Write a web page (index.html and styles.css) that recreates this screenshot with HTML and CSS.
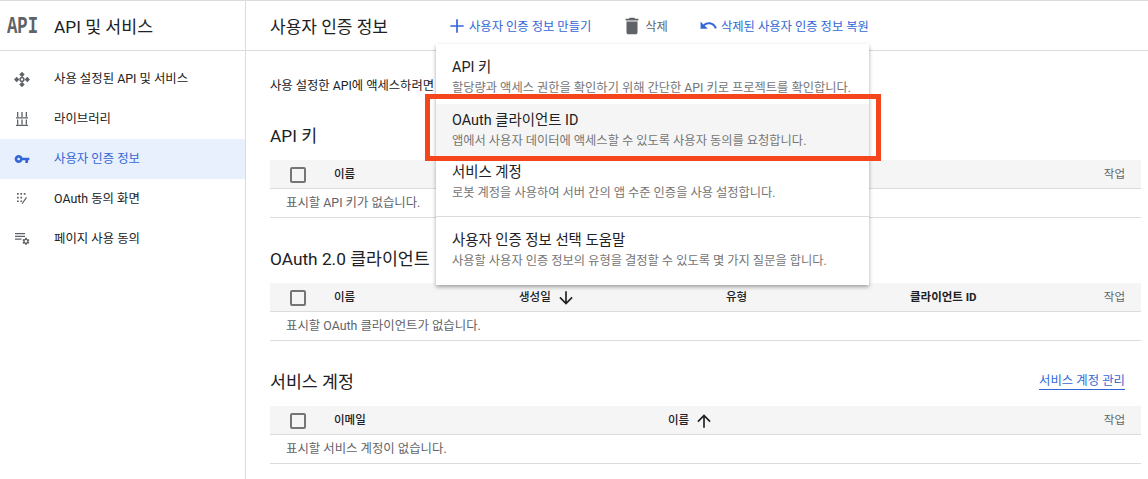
FILE: index.html
```html
<!DOCTYPE html>
<html lang="ko">
<head>
  <meta charset="UTF-8">
  <meta name="viewport" content="width=device-width, initial-scale=1.0">
  <title>사용자 인증 정보</title>
  <link rel="stylesheet" href="styles.css">
</head>
<body>

  <aside class="sidebar">
    <div class="brand">
      <span class="brand-logo"><span class="brand-logo-text">API</span></span>
      <span class="brand-name">API 및 서비스</span>
    </div>
    <nav class="nav">
      <a class="nav-item">
        <svg class="nav-icon" viewBox="0 0 16 16"><path d="M8 .8l2.7 2.7L8 6.200 5.300 3.500zM8 10.800l2.700 2.700L8 16.200l-2.700-2.700zM2.700 5.800L5.400 8.500l-2.700 2.700L0 8.500zM13.300 5.800L16 8.500l-2.700 2.700-2.700-2.700z"/><circle cx="8" cy="8.500" r="1.900" fill="none" stroke="#5f6368" stroke-width="1.500"/></svg>
        사용 설정된 API 및 서비스
      </a>
      <a class="nav-item">
        <svg class="nav-icon" viewBox="0 0 16 16"><path d="M3 1h1.300v5H3zM7.350 1h1.300v5h-1.300zM11.700 1H13v5h-1.300zM2 6.200h12v1.200H2zM3 8.600h1.300v5H3zM7.350 8.600h1.300v5h-1.300zM11.700 8.600H13v5h-1.300zM2 13.800h12V15H2z"/></svg>
        라이브러리
      </a>
      <a class="nav-item active">
        <svg class="nav-icon" viewBox="0 0 24 24"><path d="M12.650 10C11.830 7.670 9.610 6 7 6c-3.310 0-6 2.690-6 6s2.690 6 6 6c2.610 0 4.830-1.670 5.650-4H17v4h4v-4h2v-4H12.650zM7 14c-1.100 0-2-.9-2-2s.9-2 2-2 2 .9 2 2-.9 2-2 2z"/></svg>
        사용자 인증 정보
      </a>
      <a class="nav-item">
        <svg class="nav-icon" viewBox="0 0 16 16"><path d="M3 2h1.700v1.700H3zM6.400 2h1.700v1.700H6.400zM9.800 2h1.700v1.700H9.800zM3 5.700h1.700v1.700H3zM6.400 5.700h1.700v1.700H6.400zM3 9.400h1.700v1.700H3zM6.400 9.400h1.700v1.700H6.400zM7.600 12.400L12 6l1 .7-4.400 6.400z"/></svg>
        OAuth 동의 화면
      </a>
      <a class="nav-item">
        <svg class="nav-icon" viewBox="0 0 16 16"><path d="M1 2h10v1.200H1zM1 4.800h10V6H1zM1 7.600h6.500v1.200H1z"/><path transform="translate(7.600 6) scale(.36)" d="M19.140 12.940c.04-.3.06-.61.06-.94 0-.32-.02-.64-.07-.94l2.030-1.580c.18-.14.23-.41.12-.61l-1.920-3.320c-.12-.22-.37-.29-.59-.22l-2.390.96c-.5-.38-1.030-.7-1.620-.94l-.36-2.540c-.04-.24-.24-.41-.48-.41h-3.840c-.24 0-.43.17-.47.41l-.36 2.540c-.59.24-1.130.57-1.620.94l-2.390-.96c-.22-.08-.47 0-.59.22L2.740 8.870c-.12.21-.08.47.12.61l2.030 1.580c-.05.3-.09.63-.09.94s.02.64.07.94l-2.030 1.580c-.18.14-.23.41-.12.61l1.920 3.320c.12.22.37.29.59.22l2.390-.96c.5.38 1.030.7 1.620.94l.36 2.540c.05.24.24.41.48.41h3.840c.24 0 .44-.17.47-.41l.36-2.540c.59-.24 1.130-.56 1.620-.94l2.390.96c.22.08.47 0 .59-.22l1.920-3.320c.12-.22.07-.47-.12-.61l-2.010-1.580zM12 15.600c-1.980 0-3.600-1.620-3.600-3.600s1.620-3.600 3.600-3.600 3.600 1.620 3.600 3.600-1.620 3.600-3.600 3.600z"/></svg>
        페이지 사용 동의
      </a>
    </nav>
  </aside>

  <div class="main">
    <header class="toolbar">
      <h1 class="page-title">사용자 인증 정보</h1>
      <a class="tool tool-add">
        <svg class="tool-icon" viewBox="0 0 24 24"><path d="M20 13h-7v7h-2v-7H4v-2h7V4h2v7h7z"/></svg>
        사용자 인증 정보 만들기
      </a>
      <a class="tool tool-delete">
        <svg class="tool-icon" viewBox="0 0 24 24"><path d="M6 19c0 1.100.9 2 2 2h8c1.100 0 2-.9 2-2V7H6v12zM19 4h-3.500l-1-1h-5l-1 1H5v2h14V4z"/></svg>
        삭제
      </a>
      <a class="tool tool-restore">
        <svg class="tool-icon" viewBox="0 0 24 24"><path d="M12.500 8c-2.650 0-5.050.99-6.900 2.600L2 7v9h9l-3.620-3.620c1.390-1.160 3.160-1.880 5.120-1.880 3.540 0 6.550 2.310 7.600 5.500l2.370-.78C21.080 11.030 17.150 8 12.500 8z"/></svg>
        삭제된 사용자 인증 정보 복원
      </a>
    </header>

    <div class="content">
      <p class="intro">사용 설정한 API에 액세스하려면</p>

      <section class="section">
        <div class="section-head"><h2>API 키</h2></div>
        <table>
          <colgroup><col class="col-check"><col><col class="col-action"></colgroup>
          <thead>
            <tr>
              <th><span class="checkbox"></span></th>
              <th>이름</th>
              <th class="action">작업</th>
            </tr>
          </thead>
          <tbody>
            <tr><td class="empty" colspan="3">표시할 API 키가 없습니다.</td></tr>
          </tbody>
        </table>
      </section>

      <section class="section">
        <div class="section-head"><h2>OAuth 2.0 클라이언트</h2></div>
        <table>
          <colgroup><col class="col-check"><col class="col-a"><col class="col-b"><col class="col-c"><col><col class="col-action"></colgroup>
          <thead>
            <tr>
              <th><span class="checkbox"></span></th>
              <th>이름</th>
              <th class="sorted">생성일 <svg class="sort-icon" viewBox="0 0 24 24"><path d="M20 12l-1.410-1.410L13 16.170V4h-2v12.170l-5.580-5.590L4 12l8 8 8-8z"/></svg></th>
              <th>유형</th>
              <th class="strong">클라이언트 ID</th>
              <th class="action">작업</th>
            </tr>
          </thead>
          <tbody>
            <tr><td class="empty" colspan="6">표시할 OAuth 클라이언트가 없습니다.</td></tr>
          </tbody>
        </table>
      </section>

      <section class="section">
        <div class="section-head">
          <h2>서비스 계정</h2>
          <a class="manage-link">서비스 계정 관리</a>
        </div>
        <table>
          <colgroup><col class="col-check"><col class="col-d"><col><col class="col-action"></colgroup>
          <thead>
            <tr>
              <th><span class="checkbox"></span></th>
              <th>이메일</th>
              <th class="sorted">이름 <svg class="sort-icon" viewBox="0 0 24 24"><path d="M4 12l1.410 1.410L11 7.830V20h2V7.830l5.580 5.590L20 12l-8-8-8 8z"/></svg></th>
              <th class="action">작업</th>
            </tr>
          </thead>
          <tbody>
            <tr><td class="empty" colspan="4">표시할 서비스 계정이 없습니다.</td></tr>
          </tbody>
        </table>
      </section>
    </div>
  </div>

  <div class="menu">
    <a class="menu-item">
      <span class="menu-title">API 키</span>
      <span class="menu-desc">할당량과 액세스 권한을 확인하기 위해 간단한 API 키로 프로젝트를 확인합니다.</span>
    </a>
    <a class="menu-item hover">
      <span class="menu-title">OAuth 클라이언트 ID</span>
      <span class="menu-desc">앱에서 사용자 데이터에 액세스할 수 있도록 사용자 동의를 요청합니다.</span>
    </a>
    <a class="menu-item">
      <span class="menu-title">서비스 계정</span>
      <span class="menu-desc">로봇 계정을 사용하여 서버 간의 앱 수준 인증을 사용 설정합니다.</span>
    </a>
    <div class="menu-divider"></div>
    <a class="menu-item">
      <span class="menu-title">사용자 인증 정보 선택 도움말</span>
      <span class="menu-desc">사용할 사용자 인증 정보의 유형을 결정할 수 있도록 몇 가지 질문을 합니다.</span>
    </a>
  </div>

  <div class="highlight"></div>

</body>
</html>
```

FILE: styles.css
```css
* {
  box-sizing: border-box;
}
html, body {
  height: 479px;
}
body {
  margin: 0;
  display: flex;
  overflow: hidden;
  position: relative;
  border-top: 1px solid #dadce0;
  font-family: Roboto, "Noto Sans CJK KR", sans-serif;
  font-size: 12.3px;
  color: #202124;
  background-color: #fff;
}
a {
  text-decoration: none;
}

/* sidebar */
.sidebar {
  width: 246px;
  flex: none;
  border-right: 1px solid #dadce0;
}
.brand {
  height: 50px;
  display: flex;
  align-items: center;
  border-bottom: 1px solid #dadce0;
  padding-left: 7px;
}
.brand-logo {
  width: 47px;
  height: 24px;
  margin-top: 2px;
}
.brand-logo-text {
  display: block;
  transform: scaleX(0.72);
  transform-origin: left center;
  font-family: "Liberation Mono", monospace;
  font-size: 24px;
  line-height: 24px;
  font-weight: bold;
  color: #5f6368;
}
.brand-name {
  font-size: 17.3px;
}
.nav {
  padding-top: 8px;
}
.nav-item {
  height: 40px;
  display: flex;
  align-items: center;
  padding: 0 0 2px 14px;
  font-size: 12.4px;
  color: #202124;
}
.nav-icon {
  width: 16px;
  height: 16px;
  margin: 2px 24px 0 0;
  fill: #5f6368;
}
.nav-item.active {
  background-color: #e8f0fe;
  color: #3367d6;
}
.nav-item.active .nav-icon {
  fill: #3367d6;
}

/* toolbar */
.main {
  flex: 1;
  min-width: 0;
}
.toolbar {
  height: 50px;
  display: flex;
  align-items: center;
  border-bottom: 1px solid #dadce0;
  padding-left: 24px;
}
.page-title {
  width: 177px;
  margin: 0;
  font-size: 17px;
  font-weight: 400;
}
.tool {
  display: flex;
  align-items: center;
  gap: 2px;
  color: #3367d6;
}
.tool-icon {
  fill: currentColor;
}
.tool-add {
  margin-right: 30px;
}
.tool-add .tool-icon {
  width: 20px;
  height: 20px;
}
.tool-delete {
  margin-right: 31px;
  color: #5f6368;
}
.tool-delete .tool-icon {
  width: 22px;
  height: 22px;
}
.tool-restore {
  gap: 3px;
}
.tool-restore .tool-icon {
  width: 19px;
  height: 19px;
}

/* content */
.content {
  padding: 26px 7px 0 24px;
}
.intro {
  margin: 0 0 2px;
  line-height: 18px;
}
.section {
  margin-top: 15px;
}
.section-head {
  height: 50px;
  display: flex;
  align-items: center;
  justify-content: space-between;
  padding: 0 16px 2px 0;
}
.section-head h2 {
  margin: 0;
  font-size: 17.3px;
  font-weight: 400;
}
.manage-link {
  font-size: 12.4px;
  color: #3367d6;
  border-bottom: 1px solid #3367d6;
}

/* tables */
table {
  width: 100%;
  table-layout: fixed;
  border-collapse: separate;
  border-spacing: 0;
}
.col-check {
  width: 64px;
}
.col-a {
  width: 185px;
}
.col-b {
  width: 207px;
}
.col-c {
  width: 184px;
}
.col-d {
  width: 334px;
}
.col-action {
  width: 120px;
}
th {
  height: 29px;
  padding: 0 0 2px;
  text-align: left;
  font-size: 11.5px;
  font-weight: 500;
  background-color: #f5f5f5;
  border-bottom: 1px solid #dadce0;
}
th:first-child {
  padding: 1px 0 0 20px;
}
.checkbox {
  display: block;
  width: 16px;
  height: 16px;
  border: 2px solid #757575;
  border-radius: 2px;
}
.sorted {
  white-space: nowrap;
}
.sort-icon {
  width: 20px;
  height: 20px;
  margin: -6px 0 -6px 2px;
  vertical-align: middle;
  fill: #202124;
}
.strong {
  font-weight: 700;
}
.action {
  padding-right: 16px;
  text-align: right;
  font-weight: 400;
  color: #5f6368;
}
td.empty {
  height: 29px;
  padding: 0 0 2px 16px;
  font-size: 12.4px;
  color: #5f6368;
  border-bottom: 1px solid #dadce0;
}

/* create credentials menu */
.menu {
  position: absolute;
  left: 436px;
  top: 43px;
  width: 433px;
  height: 241px;
  padding: 7px 0 8px;
  background-color: #fff;
  box-shadow: 0 2px 4px rgba(0, 0, 0, 0.35);
}
.menu-item {
  height: 52px;
  display: flex;
  flex-direction: column;
  justify-content: center;
  gap: 3px;
  padding-left: 16px;
  color: #202124;
}
.menu-item.hover {
  margin-top: 1px;
  background-color: #f5f5f5;
}
.menu-title {
  font-size: 14.4px;
  line-height: 18px;
}
.menu-desc {
  font-size: 12.25px;
  line-height: 16px;
  color: #757575;
}
.menu-divider {
  height: 1px;
  margin: 8px 0 7px;
  background-color: #dadce0;
}

/* red annotation box from the screenshot */
.highlight {
  position: absolute;
  left: 425px;
  top: 93px;
  width: 456px;
  height: 67px;
  border: 5px solid #f4451c;
}
```
